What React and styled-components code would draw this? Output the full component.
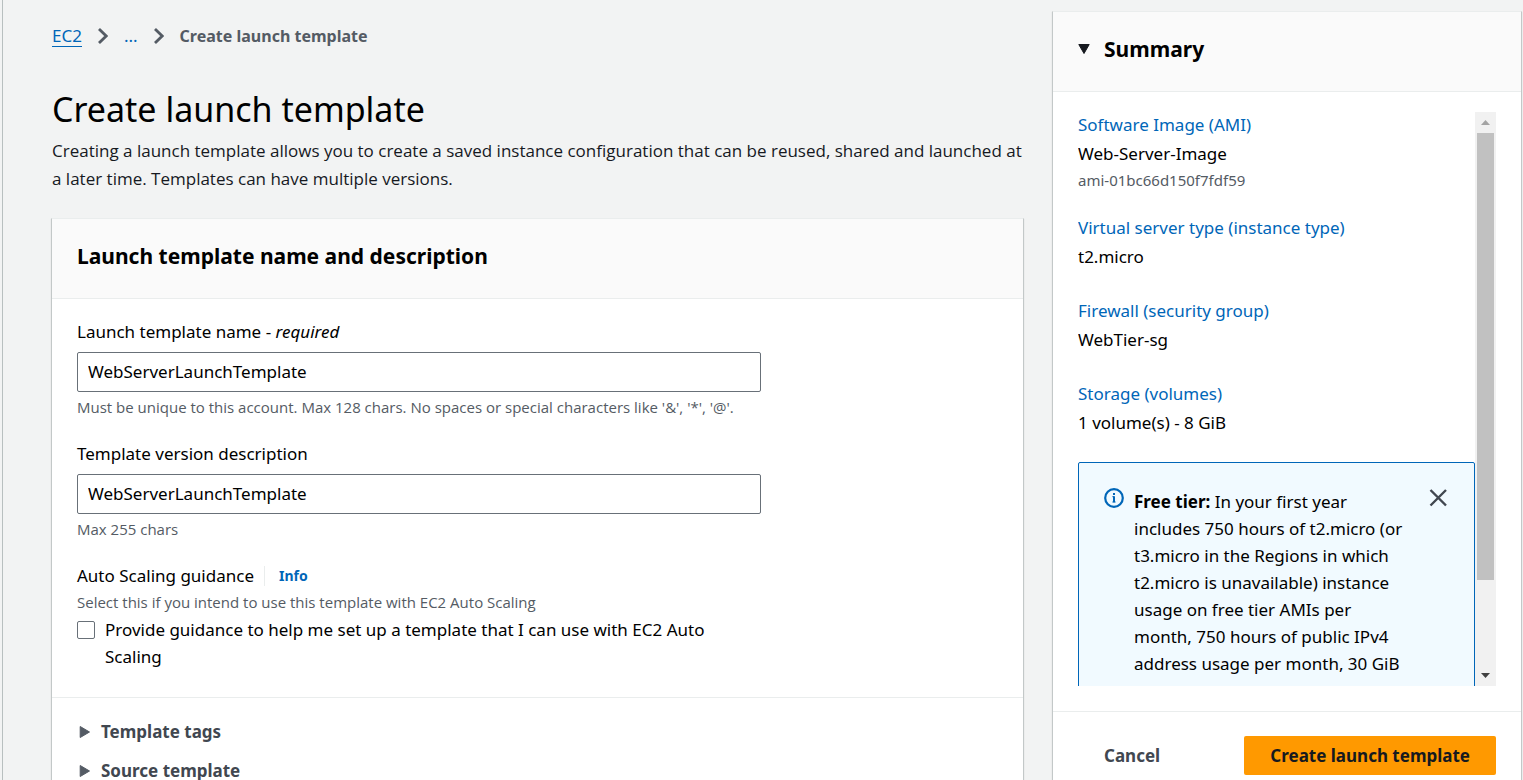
import React, { useState } from 'react';
import styled, { createGlobalStyle } from 'styled-components';

const ink = '#16191f';
const grey = '#545b64';
const blue = '#0066b8';
const line = '#eaeded';

const GlobalStyle = createGlobalStyle`
  *, *::before, *::after { box-sizing: border-box; }
  body {
    margin: 0;
    background: #f2f3f3;
    color: #000;
    font: 17px/28px "Noto Sans", "Open Sans", sans-serif;
  }
  h1, h2, h3, p, ol, dl, dd { margin: 0; padding: 0; }
  button, input { font: inherit; color: inherit; }
  a { color: ${blue}; text-decoration: none; }
`;

const Page = styled.div`
  display: grid;
  grid-template-columns: minmax(0, 1fr) 470px;
  gap: 28px;
  height: 100vh;
  margin-left: 2px;
  padding: 0 1px 0 48px;
  border-left: 1px solid #b8bfbf;
  overflow: hidden;
`;

const Main = styled.main`
  min-width: 0;
`;

const Crumbs = styled.nav`
  padding: 22px 1px 0;

  ol {
    display: flex;
    align-items: center;
    gap: 16px;
    list-style: none;
  }
  li {
    display: flex;
    align-items: center;
    gap: 16px;
  }
  svg { display: block; }
`;

const CrumbLink = styled.a`
  line-height: 20px;
  border-bottom: 1px solid ${(p) => (p.$plain ? 'transparent' : blue)};
`;

const CrumbCurrent = styled.span`
  color: ${grey};
  font-size: 16px;
  font-weight: 700;
`;

const PageTitle = styled.h1`
  margin: 35px 1px 0;
  font-size: 34px;
  line-height: 48px;
  font-weight: 400;
  color: #000;
`;

const Lead = styled.p`
  padding: 4px 1px 0;
  color: ${ink};
  font-family: "Open Sans", "Noto Sans", sans-serif;
`;

const Card = styled.section`
  display: flex;
  flex-direction: column;
  background: #fff;
  border: 1px solid #c3c8c8;
  border-top-color: ${line};
  box-shadow: 0 1px 1px rgba(0, 28, 36, 0.15);
`;

const FormCard = styled(Card)`
  margin-top: 25px;
  min-height: 800px;
`;

const CardHeader = styled.header`
  display: flex;
  height: 80px;
  padding: 21px 25px;
  background: #fafafa;
  border-bottom: 1px solid ${line};
`;

const CardTitle = styled.h2`
  font-size: 21px;
  line-height: 32px;
  font-weight: 700;
`;

const FormBody = styled.form`
  display: flex;
  flex-direction: column;
  gap: 21px;
  padding: 19px 25px 27px;
`;

const Field = styled.div`
  display: flex;
  flex-direction: column;
  width: 75%;
  max-width: 684px;
`;

const TextInput = styled.input`
  height: 40px;
  margin-top: 6px;
  padding: 0 10px 2px;
  border: 1px solid #687078;
  border-radius: 2px;
  background: #fff;
`;

const Hint = styled.span`
  margin-top: ${(p) => (p.$tight ? 0 : 3)}px;
  color: ${grey};
  font-family: "Open Sans", "Noto Sans", sans-serif;
  font-size: 15px;
  line-height: 24px;
`;

const LabelRow = styled.div`
  display: flex;
  align-items: center;
`;

const InfoLink = styled.a`
  margin-left: 10px;
  padding-left: 14px;
  border-left: 1px solid ${line};
  font-size: 14px;
  line-height: 20px;
  font-weight: 700;
`;

const CheckRow = styled.label`
  display: flex;
  align-items: flex-start;
  gap: 10px;
  margin-top: 2px;
  line-height: 27px;
`;

const CheckBox = styled.input`
  appearance: none;
  flex: none;
  width: 18px;
  height: 18px;
  margin: 5px 0 0;
  border: 1px solid #687078;
  border-radius: 2px;
  background: #fff;
  &:checked { background: ${blue}; }
`;

const Extras = styled.div`
  display: flex;
  flex-direction: column;
  align-items: flex-start;
  gap: 11px;
  padding: 20px 27px;
  border-top: 1px solid ${line};
`;

const Expander = styled.button`
  display: flex;
  align-items: center;
  gap: 10px;
  padding: 0;
  border: 0;
  background: none;
  color: #414750;
  font-weight: 700;
`;

const SummaryCard = styled(Card)`
  margin-top: 11px;
  height: 800px;
`;

const Toggle = styled.button`
  display: flex;
  align-items: center;
  gap: 14px;
  height: 32px;
  padding: 0;
  border: 0;
  background: none;
`;

const SummaryBody = styled.div`
  display: flex;
  height: 574px;
  margin: 20px 25px 25px;
`;

const Scroller = styled.div`
  flex: 1;
  min-width: 0;
  overflow-y: auto;
  scrollbar-width: none;
`;

const ScrollTrack = styled.div`
  display: flex;
  flex-direction: column;
  flex: none;
  width: 21px;
  background: #f1f1f1;
`;

const ScrollArrow = styled.span`
  display: grid;
  place-items: center;
  flex: none;
  height: 21px;
`;

const ScrollRail = styled.span`
  flex: 1;
  padding: 0 2px;
`;

const ScrollThumb = styled.span`
  display: block;
  height: 84%;
  background: #c1c1c1;
`;

const Facts = styled.dl`
  display: flex;
  flex-direction: column;
  gap: 25px;
`;

const Fact = styled.div`
  dt { line-height: 25px; }
  dd { line-height: 33px; }
`;

const FactNote = styled.dd`
  && {
    color: ${grey};
    font-size: 15px;
    line-height: 20px;
  }
`;

const Notice = styled.aside`
  display: grid;
  grid-template-columns: 20px minmax(0, 1fr) 20px;
  gap: 10px;
  margin-top: 23px;
  padding: 25px;
  border: 1px solid ${blue};
  border-radius: 2px;
  background: #f1faff;

  p {
    padding-right: 12px;
    line-height: 27px;
  }
  svg { display: block; }
`;

const CloseButton = styled.button`
  align-self: start;
  padding: 0;
  border: 0;
  background: none;
`;

const Footer = styled.footer`
  display: flex;
  justify-content: space-between;
  padding: 24px 25px;
  border-top: 1px solid ${line};
`;

const Button = styled.button`
  height: 39px;
  padding: 0 26px;
  border: 0;
  border-radius: 2px;
  background: ${(p) => (p.$primary ? '#ff9900' : 'transparent')};
  color: ${(p) => (p.$primary ? ink : '#414750')};
  font-weight: 700;
`;

const Chevron = () => (
  <svg width="10" height="18" viewBox="0 0 10 18" fill="none" stroke={grey} strokeWidth="2.8" aria-hidden="true">
    <path d="M1 2l7.2 7L1 16" />
  </svg>
);

const RightCaret = () => (
  <svg width="12" height="14" viewBox="0 0 12 14" fill={grey} stroke={grey} strokeLinejoin="round" aria-hidden="true">
    <path d="M1.2 1.5v11L10.5 7z" />
  </svg>
);

const DownCaret = () => (
  <svg width="12" height="12" viewBox="0 0 12 12" fill={ink} stroke={ink} strokeLinejoin="round" aria-hidden="true">
    <path d="M0.8 1.5h10.4L6 10.5z" />
  </svg>
);

const InfoIcon = () => (
  <svg width="20" height="20" viewBox="0 0 20 20" fill="none" stroke={blue} strokeWidth="2.2" aria-hidden="true">
    <circle cx="10" cy="10" r="8.8" />
    <path d="M10 8.2v6M9 5.9h2" strokeWidth="2" />
    <path d="M8.4 8.7H10M8.4 14h3.2" strokeWidth="1" />
  </svg>
);

const CloseIcon = () => (
  <svg width="20" height="20" viewBox="0 0 20 20" fill="none" stroke="#414750" strokeWidth="2.4" aria-hidden="true">
    <path d="M1.5 2l15.5 15.5M17 2L1.5 17.5" />
  </svg>
);

const facts = [
  { term: 'Software Image (AMI)', value: 'Web-Server-Image', note: 'ami-01bc66d150f7fdf59' },
  { term: 'Virtual server type (instance type)', value: 't2.micro' },
  { term: 'Firewall (security group)', value: 'WebTier-sg' },
  { term: 'Storage (volumes)', value: '1 volume(s) - 8 GiB' },
];

export default function App() {
  const [name, setName] = useState('WebServerLaunchTemplate');
  const [description, setDescription] = useState('WebServerLaunchTemplate');

  return (
    <>
      <GlobalStyle />
      <Page>
        <Main>
          <Crumbs aria-label="Breadcrumbs">
            <ol>
              <li><CrumbLink href="#ec2">EC2</CrumbLink><Chevron /></li>
              <li><CrumbLink href="#path" $plain>...</CrumbLink></li>
              <li><Chevron /><CrumbCurrent>Create launch template</CrumbCurrent></li>
            </ol>
          </Crumbs>
          <PageTitle>Create launch template</PageTitle>
          <Lead>
            Creating a launch template allows you to create a saved instance configuration that can be
            reused, shared and launched at a later time. Templates can have multiple versions.
          </Lead>

          <FormCard>
            <CardHeader>
              <CardTitle>Launch template name and description</CardTitle>
            </CardHeader>
            <FormBody>
              <Field>
                <label htmlFor="name">Launch template name - <em>required</em></label>
                <TextInput id="name" value={name} onChange={(e) => setName(e.target.value)} />
                <Hint>Must be unique to this account. Max 128 chars. No spaces or special characters like '&amp;', '*', '@'.</Hint>
              </Field>
              <Field>
                <label htmlFor="description">Template version description</label>
                <TextInput id="description" value={description} onChange={(e) => setDescription(e.target.value)} />
                <Hint>Max 255 chars</Hint>
              </Field>
              <Field>
                <LabelRow>
                  <span>Auto Scaling guidance</span>
                  <InfoLink href="#info">Info</InfoLink>
                </LabelRow>
                <Hint $tight>Select this if you intend to use this template with EC2 Auto Scaling</Hint>
                <CheckRow>
                  <CheckBox type="checkbox" />
                  <span>Provide guidance to help me set up a template that I can use with EC2 Auto Scaling</span>
                </CheckRow>
              </Field>
            </FormBody>
            <Extras>
              <Expander type="button"><RightCaret />Template tags</Expander>
              <Expander type="button"><RightCaret />Source template</Expander>
            </Extras>
          </FormCard>
        </Main>

        <SummaryCard>
          <CardHeader>
            <Toggle type="button" aria-expanded="true">
              <DownCaret />
              <CardTitle as="span">Summary</CardTitle>
            </Toggle>
          </CardHeader>
          <SummaryBody>
            <Scroller>
              <Facts>
                {facts.map((f) => (
                  <Fact key={f.term}>
                    <dt><a href="#section">{f.term}</a></dt>
                    <dd>{f.value}</dd>
                    {f.note && <FactNote>{f.note}</FactNote>}
                  </Fact>
                ))}
              </Facts>
              <Notice>
                <InfoIcon />
                <p>
                  <strong>Free tier:</strong> In your first year includes 750 hours of t2.micro (or
                  t3.micro in the Regions in which t2.micro is unavailable) instance usage on free tier
                  AMIs per month, 750 hours of public IPv4 address usage per month, 30 GiB
                </p>
                <CloseButton type="button" aria-label="Dismiss"><CloseIcon /></CloseButton>
              </Notice>
            </Scroller>
            <ScrollTrack aria-hidden="true">
              <ScrollArrow>
                <svg width="9" height="5" viewBox="0 0 9 5" fill="#a3a3a3"><path d="M0 5L4.5 0 9 5z" /></svg>
              </ScrollArrow>
              <ScrollRail><ScrollThumb /></ScrollRail>
              <ScrollArrow>
                <svg width="9" height="5" viewBox="0 0 9 5" fill="#404040"><path d="M0 0h9L4.5 5z" /></svg>
              </ScrollArrow>
            </ScrollTrack>
          </SummaryBody>
          <Footer>
            <Button type="button">Cancel</Button>
            <Button type="button" $primary>Create launch template</Button>
          </Footer>
        </SummaryCard>
      </Page>
    </>
  );
}
